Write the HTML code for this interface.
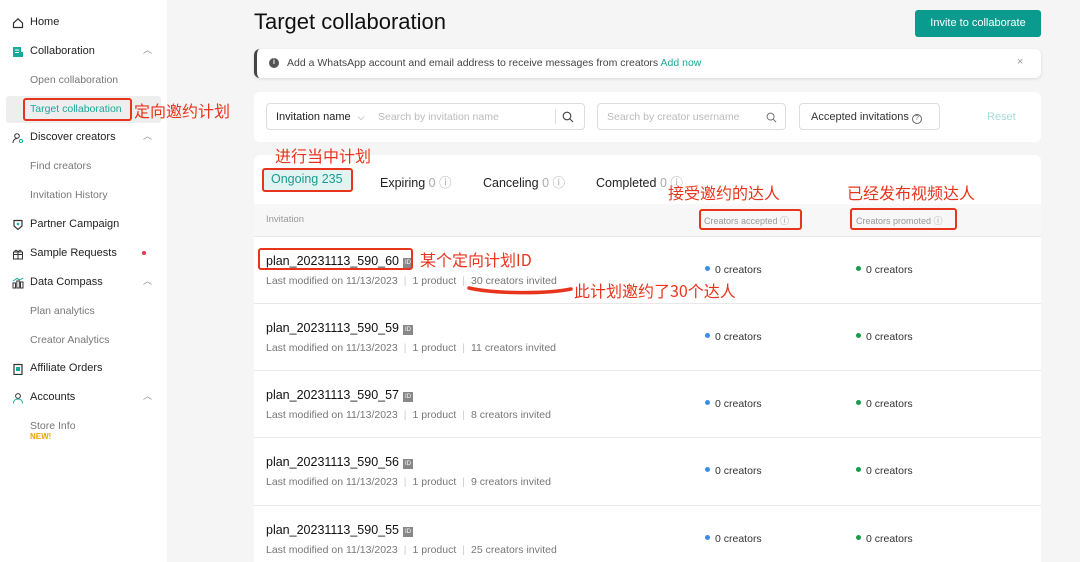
<!DOCTYPE html>
<html style="width:1080px;height:562px;overflow:hidden"><head><meta charset="utf-8"><style>
*{box-sizing:border-box;margin:0;padding:0}
body{width:1080px;height:562px;overflow:hidden;background:#f5f5f5;font-family:"Liberation Sans","Noto Sans CJK SC",sans-serif;color:#222;position:relative}
.a{position:absolute;white-space:nowrap}
#side{position:absolute;left:0;top:0;width:167px;height:562px;background:#fff}
.ni{position:absolute;left:30px;font-size:11px;color:#222}
.sub{position:absolute;left:30px;font-size:10.5px;color:#777}
.ic{position:absolute;left:12px;width:12px;height:12px}
.chev{position:absolute;left:143px;font-size:9px;color:#888}
.red{color:#e8341c;font-size:16px;font-family:"Noto Sans CJK SC",sans-serif}
.rbox{position:absolute;border:2px solid #e8341c;border-radius:3px}
.card{position:absolute;background:#fff;border-radius:6px}
.inp{position:absolute;border:1px solid #ddd;border-radius:4px;background:#fff;height:27px}
.row{position:absolute;left:254px;width:787px;height:67px;border-top:1px solid #e8e8e8;background:#fff}
.pn{position:absolute;left:12px;top:17px;font-size:12.5px;color:#111}
.idb{display:inline-block;width:10px;height:10px;background:#888;color:#fff;font-size:6px;line-height:10px;text-align:center;margin-left:4px;vertical-align:1px}
.meta{position:absolute;left:12px;top:38px;font-size:10.5px;color:#777}
.meta i{font-style:normal;color:#ccc;margin:0 6px}
.c1{position:absolute;left:451px;top:27px;font-size:10.5px;color:#333}
.c2{position:absolute;left:602px;top:27px;font-size:10.5px;color:#333}
.dot{display:inline-block;width:5px;height:5px;border-radius:50%;margin-right:5px;vertical-align:2px}
.tab{position:absolute;top:172px;font-size:12.5px;color:#222}
.tab span{color:#aaa}
</style></head><body>
<div id="side">
<svg class="ic" style="top:17px" viewBox="0 0 12 12"><path d="M1.5 6L6 1.8 10.5 6V10.5H1.5Z" fill="none" stroke="#333" stroke-width="1.2"/></svg>
<div class="ni" style="top:16px">Home</div>
<svg class="ic" style="top:46px" viewBox="0 0 12 12"><rect x="1" y="1" width="8" height="10" fill="#1aa89a"/><rect x="8" y="6" width="3" height="5" fill="#1aa89a"/><path d="M3 4h4M3 6.5h4" stroke="#fff"/></svg>
<div class="ni" style="top:45px">Collaboration</div><div class="chev" style="top:43px">︿</div>
<div class="sub" style="top:74px">Open collaboration</div>
<div class="a" style="left:6px;top:96px;width:155px;height:27px;background:#eee;border-radius:3px"></div>
<div class="rbox" style="left:23px;top:98px;width:109px;height:23px"></div>
<div class="sub" style="top:103px;color:#1aa89a">Target collaboration</div>
<div class="a red" style="left:134px;top:98px">定向邀约计划</div>
<svg class="ic" style="top:132px" viewBox="0 0 12 12"><circle cx="5" cy="4" r="2.3" fill="none" stroke="#333"/><path d="M1 11c0-3 2-4.5 4-4.5" fill="none" stroke="#333"/><circle cx="9" cy="9" r="1.5" fill="none" stroke="#1aa89a"/></svg>
<div class="ni" style="top:131px">Discover creators</div><div class="chev" style="top:129px">︿</div>
<div class="sub" style="top:160px">Find creators</div>
<div class="sub" style="top:189px">Invitation History</div>
<svg class="ic" style="top:219px" viewBox="0 0 12 12"><path d="M2 1.5h8v5.5L6 10.5 2 7Z" fill="none" stroke="#333" stroke-width="1.2"/><circle cx="6" cy="5" r="1.3" fill="#1aa89a"/></svg>
<div class="ni" style="top:218px">Partner Campaign</div>
<svg class="ic" style="top:248px" viewBox="0 0 12 12"><rect x="1.5" y="4" width="9" height="7" fill="none" stroke="#333"/><path d="M6 4v7M1.5 6.5h9M6 4C4 1 2 2.5 3.5 4M6 4c2-3 4-1.5 2.5 0" fill="none" stroke="#333"/></svg>
<div class="ni" style="top:247px">Sample Requests</div>
<div class="a" style="left:142px;top:251px;width:4px;height:4px;border-radius:50%;background:#e8344c"></div>
<svg class="ic" style="top:277px" viewBox="0 0 12 12"><rect x="1" y="6" width="2.5" height="5" fill="none" stroke="#333"/><rect x="4.8" y="4" width="2.5" height="7" fill="none" stroke="#333"/><rect x="8.5" y="5" width="2.5" height="6" fill="none" stroke="#333"/><path d="M1 4l4-2.5 3 1.5 3-2" fill="none" stroke="#1aa89a"/></svg>
<div class="ni" style="top:276px">Data Compass</div><div class="chev" style="top:274px">︿</div>
<div class="sub" style="top:305px">Plan analytics</div>
<div class="sub" style="top:334px">Creator Analytics</div>
<svg class="ic" style="top:363px" viewBox="0 0 12 12"><rect x="2" y="1.5" width="8" height="10" fill="none" stroke="#333" stroke-width="1.2"/><rect x="4" y="4" width="4" height="4" fill="#1aa89a"/></svg>
<div class="ni" style="top:362px">Affiliate Orders</div>
<svg class="ic" style="top:392px" viewBox="0 0 12 12"><circle cx="6" cy="4" r="2.4" fill="none" stroke="#333"/><path d="M1.5 11.5c0-3 2-4.5 4.5-4.5s4.5 1.5 4.5 4.5" fill="none" stroke="#1aa89a"/></svg>
<div class="ni" style="top:391px">Accounts</div><div class="chev" style="top:389px">︿</div>
<div class="sub" style="top:420px">Store Info</div>
<div class="a" style="left:30px;top:432px;font-size:8px;font-weight:bold;color:#e8a400">NEW!</div>
</div>

<div class="a" style="left:254px;top:9px;font-size:22px;color:#111">Target collaboration</div>
<div class="a" style="left:915px;top:10px;width:126px;height:27px;background:#0b9a8e;border-radius:3px;color:#fff;font-size:11px;line-height:27px;text-align:center">Invite to collaborate</div>

<div class="card" style="left:254px;top:49px;width:787px;height:29px;border-left:3px solid #444;box-shadow:0 1px 3px rgba(0,0,0,.12)">
<div class="a" style="left:12px;top:9px;width:10px;height:10px;border-radius:50%;background:#555;color:#fff;font-size:7px;line-height:10px;text-align:center;font-weight:bold">i</div>
<div class="a" style="left:30px;top:8px;font-size:10.5px;color:#444">Add a WhatsApp account and email address to receive messages from creators <span style="color:#1aa89a">Add now</span></div>
<div class="a" style="left:760px;top:7px;font-size:11px;color:#999">×</div>
</div>

<div class="card" style="left:254px;top:92px;width:787px;height:50px"></div>
<div class="inp" style="left:266px;top:103px;width:319px">
<div class="a" style="left:9px;top:7px;font-size:11px;color:#222">Invitation name <span style="color:#888;font-size:9px;margin-left:4px">⌵</span></div>
<div class="a" style="left:111px;top:7px;font-size:10.5px;color:#bbb">Search by invitation name</div>
<div class="a" style="left:288px;top:5px;height:15px;border-left:1px solid #ddd"></div>
<svg class="a" style="left:295px;top:7px" width="12" height="12" viewBox="0 0 12 12"><circle cx="5" cy="5" r="3.8" fill="none" stroke="#444" stroke-width="1.1"/><path d="M8 8l3 3" stroke="#444" stroke-width="1.1"/></svg>
</div>
<div class="inp" style="left:597px;top:103px;width:189px">
<div class="a" style="left:9px;top:7px;font-size:10.5px;color:#bbb">Search by creator username</div>
<svg class="a" style="left:168px;top:8px" width="11" height="11" viewBox="0 0 12 12"><circle cx="5" cy="5" r="3.8" fill="none" stroke="#666" stroke-width="1"/><path d="M8 8l3 3" stroke="#666"/></svg>
</div>
<div class="inp" style="left:799px;top:103px;width:141px">
<div class="a" style="left:11px;top:7px;font-size:11px;color:#333">Accepted invitations <span style="display:inline-block;width:10px;height:10px;border:1px solid #666;border-radius:50%;font-size:7px;line-height:8px;text-align:center;color:#666">?</span></div>
</div>
<div class="a" style="left:987px;top:111px;font-size:11px;color:#a8dcd8">Reset</div>

<div class="card" style="left:254px;top:155px;width:787px;height:407px;border-radius:6px 6px 0 0"></div>
<div class="a red" style="left:275px;top:143px">进行当中计划</div>
<div class="a" style="left:262px;top:168px;width:91px;height:24px;background:#e1f4f2;border:2px solid #e8341c;border-radius:3px"></div>
<div class="a" style="left:271px;top:172px;font-size:12.5px;color:#1a9a8e">Ongoing 235</div>
<div class="tab" style="left:380px">Expiring <span>0 ⓘ</span></div>
<div class="tab" style="left:483px">Canceling <span>0 ⓘ</span></div>
<div class="tab" style="left:596px">Completed <span>0 ⓘ</span></div>
<div class="a red" style="left:668px;top:180px">接受邀约的达人</div>
<div class="a red" style="left:847px;top:180px">已经发布视频达人</div>

<div class="a" style="left:254px;top:204px;width:787px;height:32px;background:#f7f7f7"></div>
<div class="a" style="left:266px;top:214px;font-size:9.5px;color:#999">Invitation</div>
<div class="rbox" style="left:699px;top:209px;width:103px;height:21px"></div>
<div class="a" style="left:704px;top:214px;font-size:9px;color:#999">Creators accepted ⓘ</div>
<div class="rbox" style="left:850px;top:208px;width:107px;height:22px"></div>
<div class="a" style="left:856px;top:214px;font-size:9px;color:#999">Creators promoted ⓘ</div>

<div class="row" style="top:236px">
<div class="pn">plan_20231113_590_60<span class="idb">ID</span></div>
<div class="meta">Last modified on 11/13/2023<i>|</i>1 product<i>|</i>30 creators invited</div>
<div class="c1"><span class="dot" style="background:#3a8ee6"></span>0 creators</div>
<div class="c2"><span class="dot" style="background:#1a9a4a"></span>0 creators</div>
</div>
<div class="rbox" style="left:258px;top:248px;width:155px;height:22px"></div>
<div class="a red" style="left:420px;top:247px">某个定向计划ID</div>
<svg class="a" style="left:466px;top:284px" width="108" height="12"><path d="M3 4C30 10 80 10 105 5" stroke="#e8341c" stroke-width="3.5" fill="none" stroke-linecap="round"/></svg>
<div class="a red" style="left:574px;top:278px">此计划邀约了30个达人</div>

<div class="row" style="top:303px">
<div class="pn">plan_20231113_590_59<span class="idb">ID</span></div>
<div class="meta">Last modified on 11/13/2023<i>|</i>1 product<i>|</i>11 creators invited</div>
<div class="c1"><span class="dot" style="background:#3a8ee6"></span>0 creators</div>
<div class="c2"><span class="dot" style="background:#1a9a4a"></span>0 creators</div>
</div>
<div class="row" style="top:370px">
<div class="pn">plan_20231113_590_57<span class="idb">ID</span></div>
<div class="meta">Last modified on 11/13/2023<i>|</i>1 product<i>|</i>8 creators invited</div>
<div class="c1"><span class="dot" style="background:#3a8ee6"></span>0 creators</div>
<div class="c2"><span class="dot" style="background:#1a9a4a"></span>0 creators</div>
</div>
<div class="row" style="top:437px">
<div class="pn">plan_20231113_590_56<span class="idb">ID</span></div>
<div class="meta">Last modified on 11/13/2023<i>|</i>1 product<i>|</i>9 creators invited</div>
<div class="c1"><span class="dot" style="background:#3a8ee6"></span>0 creators</div>
<div class="c2"><span class="dot" style="background:#1a9a4a"></span>0 creators</div>
</div>
<div class="row" style="top:505px;height:57px">
<div class="pn">plan_20231113_590_55<span class="idb">ID</span></div>
<div class="meta">Last modified on 11/13/2023<i>|</i>1 product<i>|</i>25 creators invited</div>
<div class="c1"><span class="dot" style="background:#3a8ee6"></span>0 creators</div>
<div class="c2"><span class="dot" style="background:#1a9a4a"></span>0 creators</div>
</div>
</body></html>
